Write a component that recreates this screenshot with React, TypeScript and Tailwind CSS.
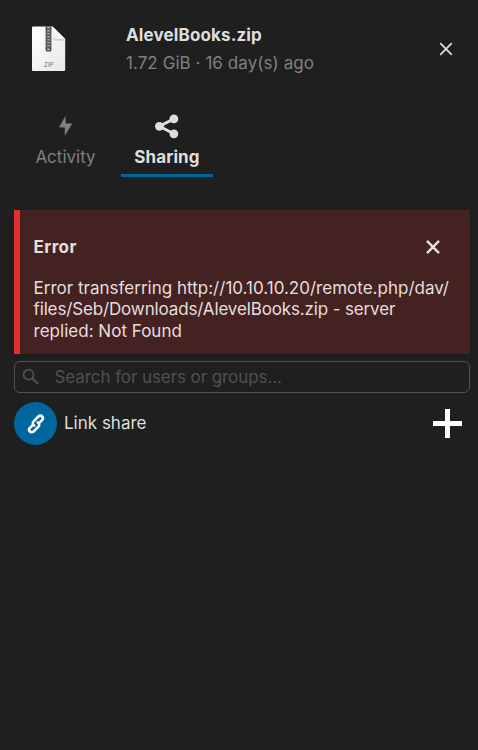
const ZipIcon = () => (
  <svg width="34" height="46" viewBox="0 0 34 46">
    <defs>
      <linearGradient id="paper" x1="0" y1="0" x2="1" y2="1">
        <stop offset="0" stopColor="#ffffff" />
        <stop offset="1" stopColor="#e8e8e8" />
      </linearGradient>
      <linearGradient id="fold" x1="0" y1="1" x2="1" y2="0">
        <stop offset="0" stopColor="#e6e6e6" />
        <stop offset="0.5" stopColor="#ffffff" />
      </linearGradient>
    </defs>
    <path d="M1 .5H20.5L33.2 13V44Q33.2 45 32.2 45H1Q0 45 0 44V1.5Q0 .5 1 .5Z" fill="url(#paper)" />
    <path d="M20.5 12L22 14.5L33.2 15V13Z" fill="#cfcfcf" />
    <path d="M20.5 .5L33.2 13H22Q20.5 13 20.5 11.5Z" fill="url(#fold)" />
    <path d="M13.6 .5H19.4V24Q19.4 25.4 18 25.4H15Q13.6 25.4 13.6 24Z" fill="#454a4e" />
    <path d="M16.5 1V21" stroke="#a9b3b8" strokeWidth="2.6" strokeDasharray="1.6 1.4" />
    <path d="M15 3V22M18 3V22" stroke="#727b80" strokeWidth=".7" />
    <path d="M15.3 23.4H17.7" stroke="#d6dadc" strokeWidth="1.4" />
    <text x="16.6" y="40.8" textAnchor="middle" fontSize="6.4" fill="#7b7b7b" fontFamily="Inter, sans-serif">
      ZIP
    </text>
  </svg>
);

const CloseIcon = ({ width, color }: { width: number; color: string }) => (
  <svg width="14" height="14" viewBox="0 0 14 14">
    <path d="M1.7 1.7L12.3 12.3M12.3 1.7L1.7 12.3" stroke={color} strokeWidth={width} strokeLinecap="round" />
  </svg>
);

const ShareIcon = () => (
  <svg width="25" height="25" viewBox="0 0 25 25" fill="#dedede">
    <path d="M19.4 4.6L4.4 12.3L19.4 20" fill="none" stroke="#dedede" strokeWidth="2.9" />
    <circle cx="18.9" cy="4.8" r="4.4" />
    <circle cx="4.4" cy="12.3" r="4.4" />
    <circle cx="18.9" cy="19.8" r="4.4" />
  </svg>
);

const LinkIcon = () => (
  <svg width="24" height="24" viewBox="0 0 24 24" fill="none" stroke="#fff" strokeWidth="2.5">
    <g transform="rotate(-45 12 12)">
      <path d="M14.4 13.6H19A2.6 2.6 0 0 0 19 8.4H12.2A2.6 2.6 0 0 0 10.2 12.8" />
      <path d="M9.6 10.4H5A2.6 2.6 0 0 0 5 15.6H11.8A2.6 2.6 0 0 0 13.8 11.2" />
    </g>
  </svg>
);

export default function App() {
  return (
    <div className="h-[750px] w-[478px] overflow-hidden bg-[#1f1f1f] font-['Inter',sans-serif] text-[17px] leading-[21.3px] text-[#dedede]">
      <header className="flex h-[97px] items-center pl-8 pr-[25px]">
        <ZipIcon />
        <div className="ml-[60px] flex-1">
          <h1 className="text-[17px] font-bold leading-7">
            <span className="tracking-[0.13px]">AlevelBooks.zip</span>
          </h1>
          <p className="leading-7 tracking-[0.06px] text-[#808080]">1.72 GiB · 16 day(s) ago</p>
        </div>
        <button aria-label="Close">
          <CloseIcon width={1.7} color="#dedede" />
        </button>
      </header>

      <nav className="flex h-[80px] gap-3 pl-[22px]">
        <button className="flex w-[87px] flex-col items-center text-[#808080]">
          <span className="flex h-[58px] items-center">
            <svg width="14" height="20" viewBox="0 0 14 20" fill="#808080">
              <path d="M6.4 0L0 11.2L5.8 11.5V20L13.3 7.6L6.8 7.5Z" />
            </svg>
          </span>
          <span className="-mt-2">Activity</span>
        </button>
        <button className="flex w-[92px] flex-col items-center border-b-3 border-[#00679e] font-bold">
          <span className="flex h-[58px] items-center">
            <ShareIcon />
          </span>
          <span className="-mt-2 tracking-[0.1px]">Sharing</span>
        </button>
      </nav>

      <main className="mt-[33px] pl-[14px] pr-2">
        <section className="h-[144px] border-l-6 border-[#e42e2e] bg-[#452222] pl-[13.5px] text-[#e4dede]">
          <div className="flex h-[67px] items-center justify-between pr-[30px] pt-[6px]">
            <h2 className="pt-0.5 text-[17px] font-bold tracking-[0.4px]">Error</h2>
            <button aria-label="Dismiss">
              <CloseIcon width={2.5} color="#e4dede" />
            </button>
          </div>
          <p className="whitespace-nowrap pt-px">
            <span className="tracking-[0.01px]">Error transferring http://10.10.10.20/remote.php/dav/</span>
            <br />
            <span className="tracking-[-0.14px]">files/Seb/Downloads/AlevelBooks.zip - server</span>
            <br />
            <span className="tracking-[0.02px]">replied: Not Found</span>
          </p>
        </section>

        <div className="mt-[7px] flex h-8 items-center rounded-md border border-[#505050] pl-[7px] text-[#505050]">
          <svg width="18" height="18" viewBox="0 0 18 18" fill="none" stroke="#505050" strokeWidth="1.9">
            <circle cx="6.6" cy="6.6" r="5" />
            <path d="M10.2 10.2L16 16" strokeWidth="2.3" />
          </svg>
          <span className="ml-[14.5px] pt-0.5 tracking-[-0.08px]">Search for users or groups...</span>
        </div>

        <div className="mt-[9px] flex h-[43px] items-center pr-2">
          <span className="flex size-[43px] items-center justify-center rounded-full bg-[#00679e]">
            <LinkIcon />
          </span>
          <span className="ml-[7px] flex-1 pt-px">Link share</span>
          <button aria-label="Add link share">
            <svg width="29" height="29" viewBox="0 0 29 29">
              <path d="M14.5 0V29M0 14.5H29" stroke="#fff" strokeWidth="5" />
            </svg>
          </button>
        </div>
      </main>
    </div>
  );
}
